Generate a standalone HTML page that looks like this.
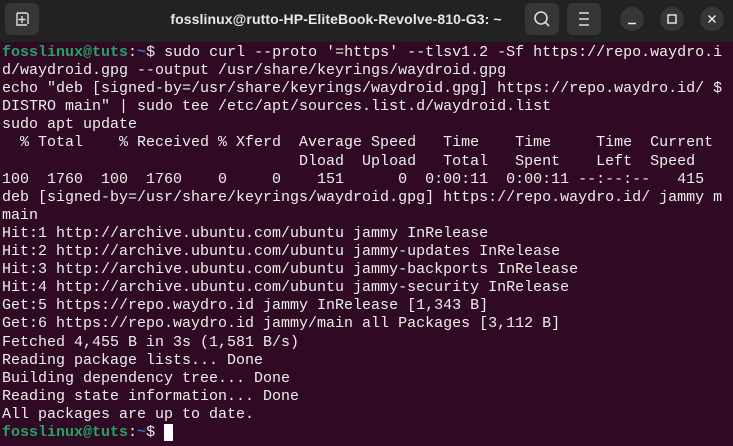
<!DOCTYPE html>
<html><head><style>
body{margin:0;width:733px;height:446px;overflow:hidden;background:#300a24;font-family:"Liberation Mono",monospace}
#tb{position:absolute;left:0;top:0;width:733px;height:42px;background:#222222}
.btn{position:absolute;top:3px;width:34px;height:32px;background:#363636;border-radius:6px}
.c{position:absolute;top:7px;width:24px;height:24px;border-radius:50%;background:#363636}
#title{position:absolute;left:0;width:672px;top:11px;text-align:center;color:#e8e8e8;font:bold 14px "Liberation Sans",sans-serif;letter-spacing:0.1px}
pre{position:absolute;left:2px;top:44px;margin:0;font-size:15px;line-height:18.1px;color:#eeeeec;font-family:"Liberation Mono",monospace}
.g{color:#26a269;font-weight:bold}.b{color:#3a6fb8;font-weight:bold}
.cur{background:#fff;color:#fff}
</style></head><body>
<div id="tb">
<div class="btn" style="left:5px"><svg width="34" height="32"><path d="M12 10h9a2 2 0 0 1 2 2v9M12 10v12h10" fill="none" stroke="#ddd" stroke-width="1.4"/><path d="M17 13v7M13.5 16.5h7" stroke="#ddd" stroke-width="1.4"/></svg></div>
<div id="title">fosslinux@rutto-HP-EliteBook-Revolve-810-G3: ~</div>
<div class="btn" style="left:525px"><svg width="34" height="32"><circle cx="16" cy="15" r="6" fill="none" stroke="#ddd" stroke-width="1.6"/><path d="M20 19l4 4" stroke="#ddd" stroke-width="1.6"/></svg></div>
<div class="btn" style="left:567px"><svg width="34" height="32"><path d="M12 10h10M12 16h10M12 22h10" stroke="#ddd" stroke-width="1.4"/></svg></div>
<div class="c" style="left:620px"><svg width="24" height="24"><path d="M8 16.5h8" stroke="#eee" stroke-width="1.5"/></svg></div>
<div class="c" style="left:660px"><svg width="24" height="24"><rect x="8" y="8" width="8" height="8" fill="none" stroke="#eee" stroke-width="1.4"/></svg></div>
<div class="c" style="left:700px"><svg width="24" height="24"><path d="M8.5 8.5l7 7M15.5 8.5l-7 7" stroke="#eee" stroke-width="1.4"/></svg></div>
</div>
<pre><span class="g">fosslinux@tuts</span>:<span class="b">~</span>$ sudo curl --proto '=https' --tlsv1.2 -Sf https://repo.waydro.i
d/waydroid.gpg --output /usr/share/keyrings/waydroid.gpg
echo "deb [signed-by=/usr/share/keyrings/waydroid.gpg] https://repo.waydro.id/ $
DISTRO main" | sudo tee /etc/apt/sources.list.d/waydroid.list
sudo apt update
  % Total    % Received % Xferd  Average Speed   Time    Time     Time  Current
                                 Dload  Upload   Total   Spent    Left  Speed
100  1760  100  1760    0     0    151      0  0:00:11  0:00:11 --:--:--   415
deb [signed-by=/usr/share/keyrings/waydroid.gpg] https://repo.waydro.id/ jammy m
main
Hit:1 http://archive.ubuntu.com/ubuntu jammy InRelease
Hit:2 http://archive.ubuntu.com/ubuntu jammy-updates InRelease
Hit:3 http://archive.ubuntu.com/ubuntu jammy-backports InRelease
Hit:4 http://archive.ubuntu.com/ubuntu jammy-security InRelease
Get:5 https://repo.waydro.id jammy InRelease [1,343 B]
Get:6 https://repo.waydro.id jammy/main all Packages [3,112 B]
Fetched 4,455 B in 3s (1,581 B/s)
Reading package lists... Done
Building dependency tree... Done
Reading state information... Done
All packages are up to date.
<span class="g">fosslinux@tuts</span>:<span class="b">~</span>$ <span class="cur">_</span></pre>
</body></html>
